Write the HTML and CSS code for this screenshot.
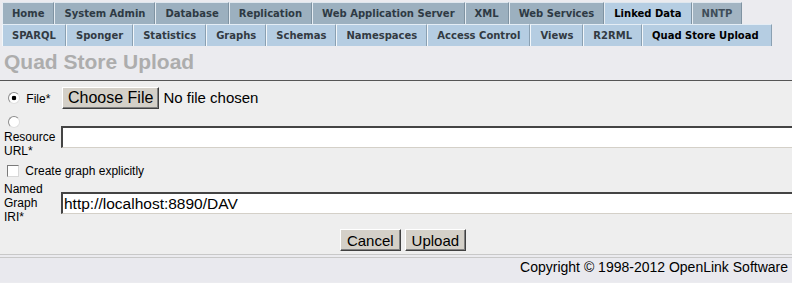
FILE: index.html
```html
<!DOCTYPE html>
<html>
<head>
<meta charset="utf-8">
<title>Quad Store Upload</title>
<link rel="stylesheet" href="styles.css">
</head>
<body>
<div class="tabs">
  <div class="tabrow main">
    <span class="tab">Home</span><span class="tab">System Admin</span><span class="tab">Database</span><span class="tab">Replication</span><span class="tab">Web Application Server</span><span class="tab">XML</span><span class="tab">Web Services</span><span class="tab active">Linked Data</span><span class="tab dim">NNTP</span>
  </div>
  <div class="tabrow sub">
    <span class="tab">SPARQL</span><span class="tab">Sponger</span><span class="tab">Statistics</span><span class="tab">Graphs</span><span class="tab">Schemas</span><span class="tab">Namespaces</span><span class="tab">Access Control</span><span class="tab">Views</span><span class="tab">R2RML</span><span class="tab active">Quad Store Upload</span>
  </div>
</div>
<h1 class="title">Quad Store Upload</h1>
<div class="formwrap">
  <table class="form">
    <tr class="r-file">
      <td class="lbl"><input type="radio" name="src" class="radio" checked> File*</td>
      <td class="fld"><input type="file" class="file"></td>
    </tr>
    <tr>
      <td class="lbl"><input type="radio" name="src" class="radio"> Resource URL*</td>
      <td class="fld"><input type="text" class="text"></td>
    </tr>
    <tr class="r-check">
      <td colspan="2" class="lbl wide"><input type="checkbox" class="check"> Create graph explicitly</td>
    </tr>
    <tr>
      <td class="lbl">Named Graph IRI*</td>
      <td class="fld"><input type="text" class="text" value="http://localhost:8890/DAV"></td>
    </tr>
    <tr class="r-btn">
      <td colspan="2"><div class="buttons"><button class="btn">Cancel</button><button class="btn">Upload</button></div></td>
    </tr>
  </table>
</div>
<div class="footer">Copyright © 1998-2012 OpenLink Software</div>
</body>
</html>
```
FILE: styles.css
```css
html, body {
  margin: 0;
  padding: 0;
  background: #ebebef;
  overflow: hidden;
}
body {
  font-family: "Liberation Sans", Arial, sans-serif;
  color: #000;
}
.tabs {
  padding: 2px 0 0 2px;
}
.tabrow {
  display: flex;
}
.tab {
  font-family: "DejaVu Sans", Verdana, sans-serif;
  font-weight: bold;
  font-size: 10px;
  line-height: 21px;
  padding: 0 9px;
  border-top: 1px solid #dfe7ee;
  border-left: 1px solid #e6edf3;
  border-right: 1px solid #7f93a2;
  white-space: nowrap;
}
.main .tab {
  background: #9cb0bf;
  color: #2e3a44;
}
.main .tab.active {
  background: #b5cde2;
  color: #000;
}
.main .tab.dim {
  background: #a2b4c2;
  color: #3f4d59;
}
.sub .tab {
  background: #b5cde2;
  color: #323a42;
  border-top-color: #e4edf5;
  border-left-color: #f2f7fb;
  border-right-color: #8aa0b2;
}
.sub .tab:last-child {
  padding-right: 12px;
}
.sub .tab.active {
  color: #000;
}
.title {
  margin: 4px 0 6px 4px;
  font-family: "Liberation Sans", Arial, sans-serif;
  font-size: 21px;
  line-height: 24px;
  font-weight: bold;
  color: #adadad;
}
.formwrap {
  background: #eeeeee;
  border-top: 1px solid #555;
  border-bottom: 1px solid #c8c8c8;
  padding-top: 3px;
  overflow: hidden;
}
.form {
  width: 806px;
  border-spacing: 2px;
}
.form td {
  padding: 1px 2px;
  vertical-align: middle;
}
.form .r-file td {
  padding-bottom: 3px;
}
.form td.lbl {
  width: 53px;
  padding: 1px 0 1px 2px;
  font-size: 12px;
  line-height: 14px;
}
.form .r-file td.lbl {
  padding-bottom: 3px;
}
.form td.lbl.wide {
  width: auto;
  padding-top: 3px;
}
.radio {
  -webkit-appearance: none;
  appearance: none;
  width: 12px;
  height: 12px;
  margin: 1px 3px 1px 4px;
  vertical-align: -2px;
  border-radius: 50%;
  border: 1px solid #8c8c8c;
  border-right-color: #e0e0e0;
  border-bottom-color: #e0e0e0;
  background: #fff;
  box-sizing: border-box;
}
.radio:checked {
  background: radial-gradient(circle at center, #000 0, #000 2px, #fff 2.6px);
}
.check {
  -webkit-appearance: none;
  appearance: none;
  width: 12px;
  height: 12px;
  margin: 0 3px 0 3px;
  vertical-align: -2px;
  border: 1px solid #7a7a7a;
  border-right-color: #d8d8d8;
  border-bottom-color: #d8d8d8;
  background: #fff;
  box-sizing: border-box;
}
.file {
  display: block;
  height: 22px;
  margin: 0 0 0 1px;
  padding: 0;
  font-family: "Liberation Sans", Arial, sans-serif;
  font-size: 15px;
  color: #000;
}
.file::file-selector-button {
  font-family: "Liberation Sans", Arial, sans-serif;
  font-size: 16px;
  height: 22px;
  margin: 0 4px 0 0;
  padding: 0 5px;
  background: #d4d0c8;
  color: #000;
  border: 1px solid;
  border-color: #fff #404040 #404040 #fff;
  box-shadow: inset -1px -1px #808080;
  border-radius: 0;
}
.text {
  display: block;
  box-sizing: border-box;
  width: 100%;
  height: 22px;
  margin: 0;
  padding: 0 1px;
  font-family: "Liberation Sans", Arial, sans-serif;
  font-size: 15.5px;
  color: #000;
  background: #fff;
  border-top: 2px solid #444;
  border-left: 2px solid #444;
  border-bottom: 1px solid #d4d0c8;
  border-right: 1px solid #d4d0c8;
  outline: none;
}
.form .r-btn td {
  padding-top: 2px;
  padding-bottom: 1px;
}
.buttons {
  display: flex;
  justify-content: center;
  gap: 4px;
}
.btn {
  height: 22px;
  margin: 0;
  padding: 0 6px;
  font-family: "Liberation Sans", Arial, sans-serif;
  font-size: 15px;
  color: #000;
  background: #d4d0c8;
  border: 1px solid;
  border-color: #fff #404040 #404040 #fff;
  box-shadow: inset -1px -1px #808080;
  border-radius: 0;
}
.footer {
  margin-top: 2px;
  border-top: 1px solid #c8c8c8;
  background: #e9e9ee;
  text-align: right;
  padding-right: 4px;
  font-size: 14px;
  line-height: 18px;
  height: 24px;
}
```
